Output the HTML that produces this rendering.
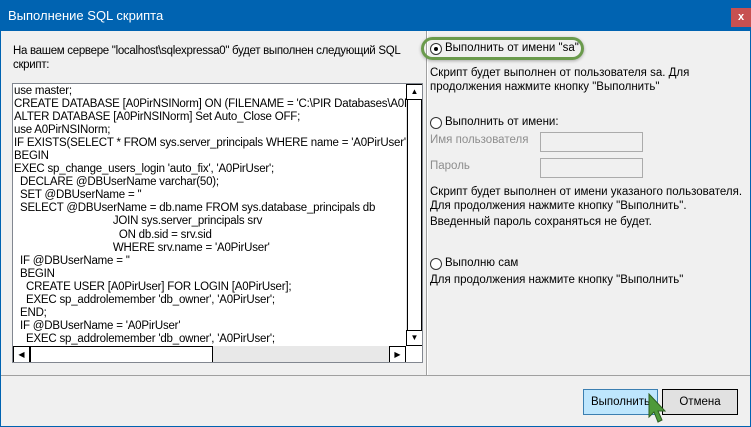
<!DOCTYPE html>
<html><head><meta charset="utf-8"><style>
*{margin:0;padding:0;box-sizing:border-box}
body{width:751px;height:427px;overflow:hidden;background:#f0f0f0;font-family:"Liberation Sans","DejaVu Sans",sans-serif;font-size:11.5px;color:#000;position:relative}
.a{position:absolute;white-space:nowrap}
#title{left:0;top:0;width:751px;height:31px;background:#0063b1}
#code{left:12px;top:83px;width:411px;height:280px;background:#fff;border:1px solid #828790;overflow:hidden}
#code pre{position:absolute;left:1px;top:1px;font-family:"Liberation Sans",sans-serif;font-size:11.5px;line-height:13.05px;letter-spacing:-0.2px}
.radio{position:absolute;width:12px;height:12px;border:1px solid #333;border-radius:50%;background:#fff}
.inp{position:absolute;width:103px;height:20px;border:1px solid #ababab;background:#f0f0f0}
.btn{position:absolute;height:26px;text-align:center;line-height:24px;font-size:11.5px}
.gray{color:#8d8d8d}
</style></head><body>
<div class="a" id="title"></div>
<div class="a" style="left:8px;top:8px;color:#fff;font-size:13px">Выполнение SQL скрипта</div>
<div class="a" style="left:731px;top:8px;width:20px;height:19px;background:#c75050;color:#fff;font-weight:bold;font-size:11px;text-align:center;line-height:18px">x</div>
<div class="a" style="left:0;top:31px;width:1px;height:396px;background:#0063b1"></div>
<div class="a" style="left:750px;top:31px;width:1px;height:396px;background:#0063b1"></div>
<div class="a" style="left:0;top:426px;width:751px;height:1px;background:#0063b1"></div>
<div class="a" style="left:426px;top:31px;width:1px;height:344px;background:#a0a0a0"></div>
<div class="a" style="left:427px;top:31px;width:1px;height:344px;background:#fff"></div>
<div class="a" style="left:1px;top:375px;width:749px;height:1px;background:#a0a0a0"></div>
<div class="a" style="left:13px;top:44px;line-height:14px;letter-spacing:-0.3px">На вашем сервере "localhost\sqlexpressa0" будет выполнен следующий SQL<br>скрипт:</div>
<div class="a" id="code"><pre>use master;
CREATE DATABASE [A0PirNSINorm] ON (FILENAME = 'C:\PIR Databases\A0PirNSINorm.mdf')
ALTER DATABASE [A0PirNSINorm] Set Auto_Close OFF;
use A0PirNSINorm;
IF EXISTS(SELECT * FROM sys.server_principals WHERE name = 'A0PirUser')
BEGIN
EXEC sp_change_users_login 'auto_fix', 'A0PirUser';
  DECLARE @DBUserName varchar(50);
  SET @DBUserName = ''
  SELECT @DBUserName = db.name FROM sys.database_principals db
                                 JOIN sys.server_principals srv
                                   ON db.sid = srv.sid
                                 WHERE srv.name = 'A0PirUser'
  IF @DBUserName = ''
  BEGIN
    CREATE USER [A0PirUser] FOR LOGIN [A0PirUser];
    EXEC sp_addrolemember 'db_owner', 'A0PirUser';
  END;
  IF @DBUserName = 'A0PirUser'
    EXEC sp_addrolemember 'db_owner', 'A0PirUser';</pre>
<div class="a" style="left:393px;top:0;width:17px;height:262px;background:#f0f0f0;border-left:1px solid #e0e0e0"></div>
<div class="a" style="left:393px;top:0;width:17px;height:16px;background:#fff;border:1px solid #000;font-size:8px;text-align:center;line-height:14px">▲</div>
<div class="a" style="left:394px;top:16px;width:15px;height:246px;border-left:1px solid #000;border-right:1px solid #000;background:#fff"></div>
<div class="a" style="left:393px;top:246px;width:17px;height:16px;background:#fff;border:1px solid #000;font-size:8px;text-align:center;line-height:14px">▼</div>
<div class="a" style="left:0;top:262px;width:393px;height:17px;background:#e8e8e8"></div>
<div class="a" style="left:0;top:262px;width:17px;height:17px;background:#fff;border:1px solid #000;font-size:8px;text-align:center;line-height:15px">◀</div>
<div class="a" style="left:17px;top:262px;width:183px;height:17px;background:#fff;border:1px solid #000"></div>
<div class="a" style="left:376px;top:262px;width:17px;height:17px;background:#fff;border:1px solid #000;font-size:8px;text-align:center;line-height:15px">▶</div>
</div>
<div class="a" style="left:421px;top:37px;width:163px;height:23px;border:3px solid #6a9a4c;border-radius:14px;box-shadow:0 1px 3px rgba(0,0,0,.3)"></div>
<div class="radio" style="left:430px;top:43px"></div>
<div class="a" style="left:434px;top:47px;width:4px;height:4px;background:#000;border-radius:50%"></div>
<div class="a" style="left:445px;top:42px">Выполнить от имени "sa"</div>
<div class="a" style="left:430px;top:66px;line-height:14px">Скрипт будет выполнен от пользователя sa. Для<br>продолжения нажмите кнопку "Выполнить"</div>
<div class="radio" style="left:430px;top:117px"></div>
<div class="a" style="left:445px;top:116px">Выполнить от имени:</div>
<div class="a gray" style="left:430px;top:134px">Имя пользователя</div>
<div class="inp" style="left:540px;top:132px"></div>
<div class="a gray" style="left:430px;top:160px">Пароль</div>
<div class="inp" style="left:540px;top:158px"></div>
<div class="a" style="left:430px;top:185px;line-height:14px">Скрипт будет выполнен от имени указаного пользователя.<br>Для продолжения нажмите кнопку "Выполнить".</div>
<div class="a" style="left:430px;top:216px">Введенный пароль сохраняться не будет.</div>
<div class="radio" style="left:430px;top:258px"></div>
<div class="a" style="left:445px;top:257px">Выполню сам</div>
<div class="a" style="left:430px;top:274px">Для продолжения нажмите кнопку "Выполнить"</div>
<div class="btn" style="left:583px;top:389px;width:75px;background:#bee6fd;border:1px solid #3c7fb1">Выполнить</div>
<div class="btn" style="left:662px;top:389px;width:76px;background:#e1e1e1;border:1px solid #000">Отмена</div>
<svg class="a" style="left:648px;top:393px" width="20" height="34" viewBox="0 0 20 34"><path d="M1 1 L1 24 L6 19 L10 29 L14 27 L10 18 L17 18 Z" fill="#4e9a3a" stroke="#2e5e20" stroke-width="1"/></svg>
</body></html>
